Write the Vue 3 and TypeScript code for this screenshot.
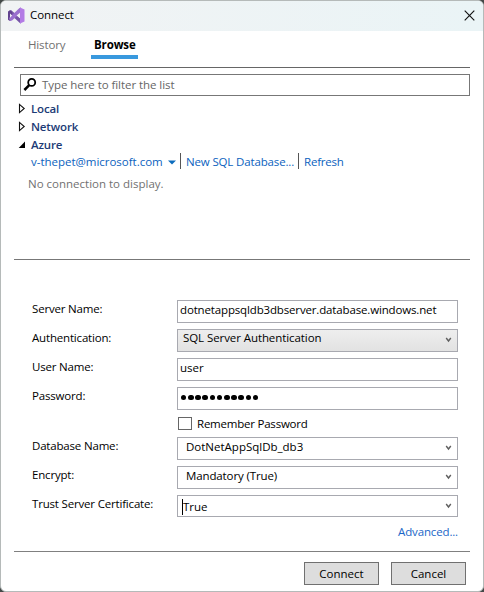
<script setup lang="ts">
import { ref } from 'vue'

interface Field {
  id: string
  label: string
  value: string
  combo?: boolean
}

const fields = ref<Field[]>([
  { id: 'server', label: 'Server Name:', value: 'dotnetappsqldb3dbserver.database.windows.net' },
  { id: 'auth', label: 'Authentication:', value: 'SQL Server Authentication', combo: true },
  { id: 'user', label: 'User Name:', value: 'user' },
  { id: 'password', label: 'Password:', value: 'hidden' },
  { id: 'remember', label: '', value: 'Remember Password' },
  { id: 'database', label: 'Database Name:', value: 'DotNetAppSqlDb_db3', combo: true },
  { id: 'encrypt', label: 'Encrypt:', value: 'Mandatory (True)', combo: true },
  { id: 'trust', label: 'Trust Server Certificate:', value: 'True', combo: true },
])
const nodes = ['Local', 'Network', 'Azure']
</script>

<template>
  <div class="desktop">
    <main class="window">
      <header class="titlebar">
        <svg class="logo" width="17" height="17" viewBox="0 0 17 17">
          <path d="M1 4 3 3 13 12V16.5L11.8 16 1.2 6Z" fill="#7654a8" />
          <path d="M0 4.5 2 3.3 4 5V12L2 14 0 12.8Z" fill="#61438f" />
          <path d="M2 14 4 13.5 13 5.5V.5L11.5 1 1 11Z" fill="#9b70ce" />
          <path d="M12 .5 16.5 2.5V14.5L12 16.5Z" fill="#b37be5" />
          <path d="M2 6.5 4.2 8.5 2 10.7ZM12 5.7V11.3L8.6 8.5Z" fill="#f1f0f6" />
        </svg>
        <h1>Connect</h1>
        <svg class="close" width="11" height="11" viewBox="0 0 11 11">
          <path d="M.7.7 10.3 10.3M10.3.7.7 10.3" fill="none" stroke="#111" stroke-width="1.15" />
        </svg>
      </header>

      <nav class="tabs">
        <span class="tab history">History</span>
        <span class="tab active">Browse</span>
      </nav>

      <section class="browser">
        <div class="search">
          <svg width="14" height="14" viewBox="0 0 14 14">
            <circle cx="8.7" cy="4.4" r="3.5" fill="none" stroke="#000" stroke-width="1.8" />
            <path d="M6.2 7.2 1.4 12" stroke="#000" stroke-width="2.5" />
          </svg>
          <span class="placeholder">Type here to filter the list</span>
        </div>
        <div v-for="node in nodes" :key="node" class="node">
          <svg width="8" height="12" viewBox="0 0 8 12">
            <path v-if="node === 'Azure'" d="M7 3.5V10H.7Z" fill="#000" />
            <path v-else d="M1.5 2.4V10.6L6.2 6.5Z" fill="#fff" stroke="#111" stroke-width="1.1" />
          </svg>
          <span :class="['node-name', node.toLowerCase()]">{{ node }}</span>
        </div>
        <div class="links">
          <span class="account">v-thepet@microsoft.com</span>
          <svg width="8" height="5" viewBox="0 0 8 5"><path d="M0 .5H8L4 4.5Z" fill="#0c6cbd" /></svg>
          <i class="bar"></i>
          <span class="newdb">New SQL Database...</span>
          <i class="bar"></i>
          <span class="refresh">Refresh</span>
        </div>
        <p class="empty">No connection to display.</p>
      </section>

      <form class="fields">
        <div v-for="field in fields" :key="field.id" :class="['row', field.id]">
          <span class="label">{{ field.label }}</span>
          <div v-if="field.id === 'remember'" class="remember-check">
            <i class="checkbox"></i><span class="value">{{ field.value }}</span>
          </div>
          <div v-else class="control">
            <i v-if="field.id === 'trust'" class="caret"></i>
            <span v-if="field.id === 'password'" class="dots"><i v-for="n in 11" :key="n"></i></span>
            <span v-else class="value">{{ field.value }}</span>
            <svg v-if="field.combo" class="chevron" width="7" height="6" viewBox="0 0 7 6">
              <path d="M1.2 1 3.5 4 5.8 1" fill="none" stroke="#606060" stroke-width="1.4" />
            </svg>
          </div>
        </div>
        <div class="advanced"><span>Advanced...</span></div>
      </form>

      <footer class="footer">
        <button type="button" class="connect">Connect</button>
        <button type="button" class="cancel">Cancel</button>
      </footer>
    </main>
  </div>
</template>

<style>
body { margin: 0; }
</style>

<style scoped>
* { box-sizing: border-box; }
.desktop { width: 484px; height: 592px; background: #444948; overflow: hidden; }
.window {
  display: flex; flex-direction: column; width: 484px; height: 592px;
  border: 1px solid #b5bab9; border-radius: 6px; overflow: hidden; background: #fff;
  color: #000; font: 11.5px/16px "Open Sans", "Noto Sans", sans-serif; white-space: nowrap;
}
svg { display: block; flex: none; }
.titlebar { display: flex; flex: none; height: 30px; padding: 0 8px 0 7px; background: linear-gradient(90deg, #f1f3f4, #eaf4f6); }
.logo { margin-top: 6px; }
h1 { margin: 6px 0 0 5px; font-size: 11.5px; font-weight: 400; line-height: 16px; letter-spacing: -0.06px; }
.close { margin: 9px 0 0 auto; }
.tabs { display: flex; flex: none; height: 37px; margin: 0 13px; border-bottom: 1px solid #666; }
.tab { height: 28px; padding-top: 6px; letter-spacing: -0.14px; }
.history { margin-left: 14px; width: 63px; color: #717171; }
.active { width: 47px; padding-left: 3px; border-bottom: 4px solid #3999de; font-weight: 700; }
.browser { flex: none; height: 192px; margin: 0 13px; padding: 6px 0 0; border-bottom: 1px solid #777; }
.search { display: flex; height: 22px; margin-left: 6px; border: 1px solid #777; }
.search svg { margin: 3px 0 0 2px; }
.placeholder { margin: 2px 0 0 5px; color: #666; letter-spacing: -0.06px; }
.node { display: flex; height: 18px; padding: 5px 0 0 4px; color: #1c3b76; font-weight: 600; letter-spacing: -0.14px; }
.node svg { margin-top: 1px; }
.node-name { margin-left: 5px; }
.links { display: flex; height: 16px; margin: 4px 0 0 17px; color: #0b62be; }
.links svg { margin: 6px 0 0 5px; }
.bar { width: 1px; height: 16px; margin: -1px 5px 0 4px; background: #555; }
.account { width: 132px; letter-spacing: -0.02px; }
.newdb { width: 108px; letter-spacing: -0.15px; }
.refresh { letter-spacing: -0.2px; }
.empty { margin: 6px 0 0 14px; color: #717171; }
.fields { flex: none; height: 292px; margin: 0 13px; padding-top: 40px; border-bottom: 1px solid #808080; }
.row { display: flex; height: 29px; padding-left: 18px; }
.label { width: 145px; padding-top: 1px; letter-spacing: -0.18px; }
.control { display: flex; width: 281px; height: 23px; padding-left: 2px; border: 1px solid #a8a9b0; }
.control .value { margin-top: 1px; }
.server .value { letter-spacing: -0.15px; }
.chevron { margin: 7px 5px 0 auto; }
.auth .control { padding-left: 5px; background: linear-gradient(#eee, #e2e2e2); }
.auth .value { margin-top: 0; letter-spacing: -0.08px; }
.database .control, .encrypt .control { padding-left: 8px; }
.encrypt .value { letter-spacing: -0.12px; }
.trust .control { height: 22px; padding-left: 4px; }
.caret { width: 1px; height: 16px; margin-top: 3px; background: #000; }
.trust .value { margin-top: 3px; }
.dots { display: flex; gap: 1.6px; padding: 6.6px 0 0 0.9px; }
.dots i { width: 5.6px; height: 5.6px; border-radius: 50%; background: #000; }
.remember { height: 21px; }
.remember-check { display: flex; }
.remember .value { letter-spacing: -0.22px; }
.checkbox { width: 14px; height: 13px; margin: 1px 5px 0 1px; border: 1px solid #666; }
.advanced { display: flex; justify-content: flex-end; padding-right: 12px; color: #1a66c8; letter-spacing: -0.15px; }
.footer { display: flex; justify-content: flex-end; gap: 12px; padding: 10px 17px 0 0; }
.footer button { width: 75px; height: 23px; padding: 0; border: 1px solid #707070; border-radius: 0; background: #ddd; color: #000; font: inherit; }
</style>
